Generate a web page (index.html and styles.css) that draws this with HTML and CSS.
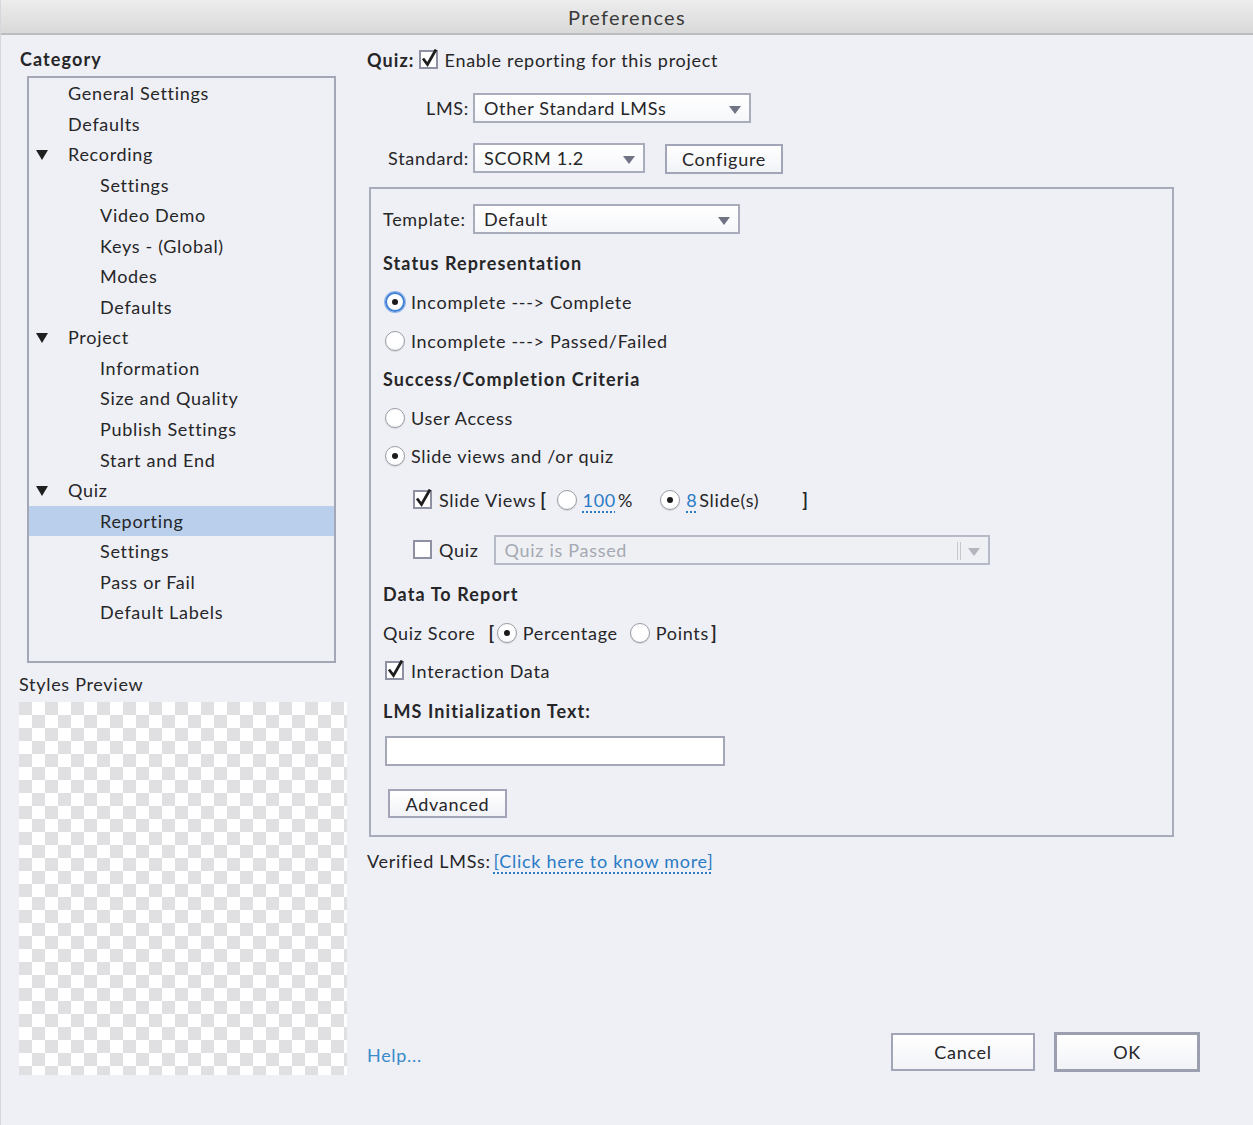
FILE: index.html
```html
<!DOCTYPE html>
<html>
<head>
<meta charset="utf-8">
<link rel="stylesheet" href="styles.css">
</head>
<body>
<div class="window">
  <div class="titlebar">Preferences</div>
  <div class="content">
    <div class="left">
      <div class="cat-title">Category</div>
      <div class="cat-box">
        <div class="item l1">General Settings</div>
        <div class="item l1">Defaults</div>
        <div class="item l1"><span class="tri"></span>Recording</div>
        <div class="item l2">Settings</div>
        <div class="item l2">Video Demo</div>
        <div class="item l2">Keys - (Global)</div>
        <div class="item l2">Modes</div>
        <div class="item l2">Defaults</div>
        <div class="item l1"><span class="tri"></span>Project</div>
        <div class="item l2">Information</div>
        <div class="item l2">Size and Quality</div>
        <div class="item l2">Publish Settings</div>
        <div class="item l2">Start and End</div>
        <div class="item l1"><span class="tri"></span>Quiz</div>
        <div class="item l2 selected">Reporting</div>
        <div class="item l2">Settings</div>
        <div class="item l2">Pass or Fail</div>
        <div class="item l2">Default Labels</div>
      </div>
      <div class="preview-title">Styles Preview</div>
      <div class="checker"></div>
    </div>

    <div class="right">
      <div class="row r-quiz">
        <span class="bold">Quiz:</span>
        <span class="cb checked"><svg viewBox="0 0 20 20" width="20" height="20"><rect x="1" y="2" width="17" height="17" fill="#fff" stroke="#8e91a2" stroke-width="2"/><path d="M4 9.5 L8.5 15.5 L17 0.5" fill="none" stroke="#1e1e1e" stroke-width="2.8" stroke-linejoin="miter"/></svg></span>
        <span class="cb-label">Enable reporting for this project</span>
      </div>
      <div class="row r-lms">
        <span class="flabel">LMS:</span>
        <div class="select w-lms"><span>Other Standard LMSs</span><span class="arrow"></span></div>
      </div>
      <div class="row r-std">
        <span class="flabel">Standard:</span>
        <div class="select w-std"><span>SCORM 1.2</span><span class="arrow"></span></div>
        <div class="btn b-config">Configure</div>
      </div>

      <div class="group">
        <div class="row r-tpl">
          <span class="tlabel">Template:</span>
          <div class="select w-tpl"><span>Default</span><span class="arrow"></span></div>
        </div>
        <div class="row heading m17">Status Representation</div>
        <div class="row m15"><span class="radio on focus"></span><span>Incomplete ---&gt; Complete</span></div>
        <div class="row m15"><span class="radio"></span><span>Incomplete ---&gt; Passed/Failed</span></div>
        <div class="row heading m14">Success/Completion Criteria</div>
        <div class="row m15"><span class="radio"></span><span>User Access</span></div>
        <div class="row m14"><span class="radio on"></span><span>Slide views and /or quiz</span></div>
        <div class="row sub r-slides">
          <span class="cb checked"><svg viewBox="0 0 20 20" width="20" height="20"><rect x="1" y="2" width="17" height="17" fill="#fff" stroke="#8e91a2" stroke-width="2"/><path d="M4 9.5 L8.5 15.5 L17 0.5" fill="none" stroke="#1e1e1e" stroke-width="2.8"/></svg></span>
          <span class="cb-label">Slide Views</span><span class="brk">[</span>
          <span class="radio r100"></span><span class="num">100</span><span class="pct">%</span>
          <span class="radio r8 on"></span><span class="num">8</span><span class="slides">Slide(s)</span>
          <span class="brk-close">]</span>
        </div>
        <div class="row sub r-quizsel">
          <span class="cb"><svg viewBox="0 0 20 20" width="20" height="20"><rect x="1" y="2" width="17" height="17" fill="#fff" stroke="#8e91a2" stroke-width="2"/></svg></span>
          <span class="cb-label">Quiz</span>
          <div class="select disabled w-quiz"><span>Quiz is Passed</span><span class="divider"></span><span class="arrow"></span></div>
        </div>
        <div class="row heading m17">Data To Report</div>
        <div class="row m15 r-score">
          <span>Quiz Score</span><span class="brk2">[</span>
          <span class="radio on"></span><span>Percentage</span>
          <span class="radio rpts"></span><span>Points</span><span class="brk3">]</span>
        </div>
        <div class="row m14">
          <span class="cb cb-int checked"><svg viewBox="0 0 20 20" width="20" height="20"><rect x="1" y="2" width="17" height="17" fill="#fff" stroke="#8e91a2" stroke-width="2"/><path d="M4 9.5 L8.5 15.5 L17 0.5" fill="none" stroke="#1e1e1e" stroke-width="2.8"/></svg></span>
          <span class="cb-label">Interaction Data</span>
        </div>
        <div class="row heading m16">LMS Initialization Text:</div>
        <div class="textinput"></div>
        <div class="btn b-adv">Advanced</div>
      </div>

      <div class="row r-verified">
        <span>Verified LMSs:</span><span class="link">[Click here to know more]</span>
      </div>

      <div class="footer">
        <span class="help">Help...</span>
        <div class="btn b-cancel">Cancel</div>
        <div class="btn b-ok">OK</div>
      </div>
    </div>
  </div>
</div>
</body>
</html>
```

FILE: styles.css
```css
html, body {
  margin: 0;
  padding: 0;
  background: #eff0f5;
}
body {
  font-family: "Lato", "Open Sans", sans-serif;
  font-size: 18px;
  letter-spacing: 0.7px;
  color: #262628;
}
.window {
  width: 1253px;
  height: 1125px;
  background: #eff0f5;
  box-sizing: border-box;
  border-left: 1px solid #d6d7dc;
  overflow: hidden;
}
.titlebar {
  height: 35px;
  box-sizing: border-box;
  background: linear-gradient(#ededed, #d9d9d9);
  border-bottom: 2px solid #bcbcbc;
  text-align: center;
  font-size: 20px;
  letter-spacing: 1.3px;
  line-height: 35px;
  color: #3a3a3a;
}
.content {
  display: flex;
}
.left {
  width: 348px;
  padding-left: 17px;
  padding-top: 12px;
  flex: none;
}
.cat-title {
  font-weight: bold;
  letter-spacing: 1.1px;
  height: 24px;
  line-height: 24px;
  margin-left: 2px;
}
.cat-box {
  margin-top: 5px;
  margin-left: 9px;
  width: 309px;
  height: 587px;
  box-sizing: border-box;
  border: 2px solid #a4a7b5;
  padding-top: 0;
}
.item {
  height: 30.55px;
  line-height: 30.55px;
  position: relative;
  white-space: nowrap;
}
.item.l1 { padding-left: 39px; }
.item.l2 { padding-left: 71px; }
.item.selected { background: #b9cfec; }
.tri {
  position: absolute;
  left: 7px;
  top: 11px;
  width: 0;
  height: 0;
  border-left: 6px solid transparent;
  border-right: 6px solid transparent;
  border-top: 10px solid #1f1f1f;
}
.preview-title {
  margin-top: 9px;
  height: 24px;
  line-height: 24px;
  margin-left: 1px;
}
.checker {
  margin-top: 6px;
  margin-left: 1px;
  width: 328px;
  height: 373px;
  background: repeating-conic-gradient(#ffffff 0 25%, #e0e0e2 0 50%) 0 0 / 26px 26px;
}

.right {
  padding-top: 13px;
  padding-left: 1px;
  flex: 1;
}
.row {
  display: flex;
  align-items: center;
  height: 24px;
  white-space: nowrap;
}
.bold, .heading { font-weight: bold; letter-spacing: 1.1px; }
.cb {
  width: 20px;
  height: 20px;
  flex: none;
  display: inline-flex;
}
.r-quiz .cb { margin-left: 4px; margin-top: -3px; }
.cb-label { margin-left: 6px; }
.flabel {
  width: 102px;
  text-align: right;
  margin-right: 4px;
}
.r-lms { height: 30px; margin-top: 21px; }
.r-std { height: 30px; margin-top: 20px; }
.select {
  height: 30px;
  box-sizing: border-box;
  border: 2px solid #a9acba;
  background: linear-gradient(#ffffff, #f6f7fa);
  display: flex;
  align-items: center;
  padding-left: 9px;
  position: relative;
}
.arrow {
  position: absolute;
  right: 8px;
  top: 11px;
  width: 0;
  height: 0;
  border-left: 6px solid transparent;
  border-right: 6px solid transparent;
  border-top: 8px solid #6f7384;
}
.w-lms { width: 278px; }
.w-std { width: 172px; }
.w-tpl { width: 267px; }
.w-quiz {
  width: 496px;
  margin-left: 15px;
  background: #eef0f4;
  border-color: #b6b9c6;
  color: #a6a9b2;
}
.w-quiz .divider {
  position: absolute;
  right: 27px;
  top: 5px;
  width: 2px;
  height: 18px;
  border-left: 1px solid #c6c8d0;
  border-right: 1px solid #c6c8d0;
}
.w-quiz .arrow { border-top-color: #b3b5be; }
.btn {
  box-sizing: border-box;
  border: 2px solid #a2a5b7;
  background: linear-gradient(#ffffff, #f2f3f7);
  display: flex;
  align-items: center;
  justify-content: center;
}
.b-config {
  width: 118px;
  height: 30px;
  margin-left: 20px;
  margin-top: 2px;
}
.group {
  margin-top: 14px;
  margin-left: 2px;
  width: 805px;
  height: 650px;
  box-sizing: border-box;
  border: 2px solid #a8abb9;
  padding: 15px 12px 0 12px;
}
.r-tpl { height: 30px; }
.tlabel { width: 85px; margin-right: 5px; }
.m14 { margin-top: 14px; }
.m15 { margin-top: 15px; }
.m16 { margin-top: 16px; }
.m17 { margin-top: 17px; }
.radio {
  width: 20px;
  height: 20px;
  box-sizing: border-box;
  border-radius: 50%;
  border: 1px solid #9a9ca6;
  background: radial-gradient(circle at 50% 40%, #ffffff 55%, #eceef2 100%);
  box-shadow: 0 1px 1px rgba(0,0,0,0.12);
  margin-left: 2px;
  margin-right: 6px;
  flex: none;
  position: relative;
}
.radio.on::after {
  content: "";
  position: absolute;
  left: 6px;
  top: 6px;
  width: 6px;
  height: 6px;
  border-radius: 50%;
  background: #1b1b1b;
}
.radio.focus {
  border: 2px solid #3f7fd6;
  box-shadow: 0 0 0 1px #8fb5ea;
}
.radio.focus::after { left: 5px; top: 5px; }
.sub { padding-left: 30px; }
.r-slides { margin-top: 20px; }
.brk { margin-left: 4px; font-weight: bold; }
.r100 { margin-left: 10px; }
.r8 { margin-left: 27px; }
.num {
  color: #2a7bc6;
  text-decoration: underline dotted #2a7bc6;
  text-underline-offset: 4px;
  text-decoration-thickness: 2px;
}
.pct { margin-left: 2px; }
.slides { margin-left: 2px; }
.brk-close { margin-left: 43px; font-weight: bold; }
.r-quizsel { height: 30px; margin-top: 23px; }
.r-score .brk2 { margin-left: 13px; font-weight: bold; margin-right: 2px; }
.r-score .radio { margin-left: 0; }
.rpts { margin-left: 12px !important; }
.brk3 { margin-left: 2px; font-weight: bold; }
.cb-int { margin-left: 2px; margin-top: -3px; }
.sub .cb { margin-top: -3px; }
.textinput {
  margin-top: 13px;
  margin-left: 2px;
  width: 340px;
  height: 30px;
  box-sizing: border-box;
  background: #ffffff;
  border: 2px solid #a4a7b5;
}
.b-adv {
  margin-top: 23px;
  margin-left: 5px;
  width: 119px;
  height: 29px;
}
.r-verified { margin-top: 12px; }
.link {
  margin-left: 3px;
  color: #2a7bc6;
  text-decoration: underline dotted #2a7bc6;
  text-underline-offset: 4px;
  text-decoration-thickness: 2px;
}
.footer {
  margin-top: 159px;
  display: flex;
  align-items: flex-start;
  height: 40px;
}
.help {
  color: #3a8bca;
  margin-top: 12px;
  width: 524px;
  flex: none;
}
.b-cancel {
  width: 144px;
  height: 38px;
  margin-top: 1px;
}
.b-ok {
  margin-left: 19px;
  width: 146px;
  height: 40px;
  border: 3px solid #9c9fb0;
}
```
